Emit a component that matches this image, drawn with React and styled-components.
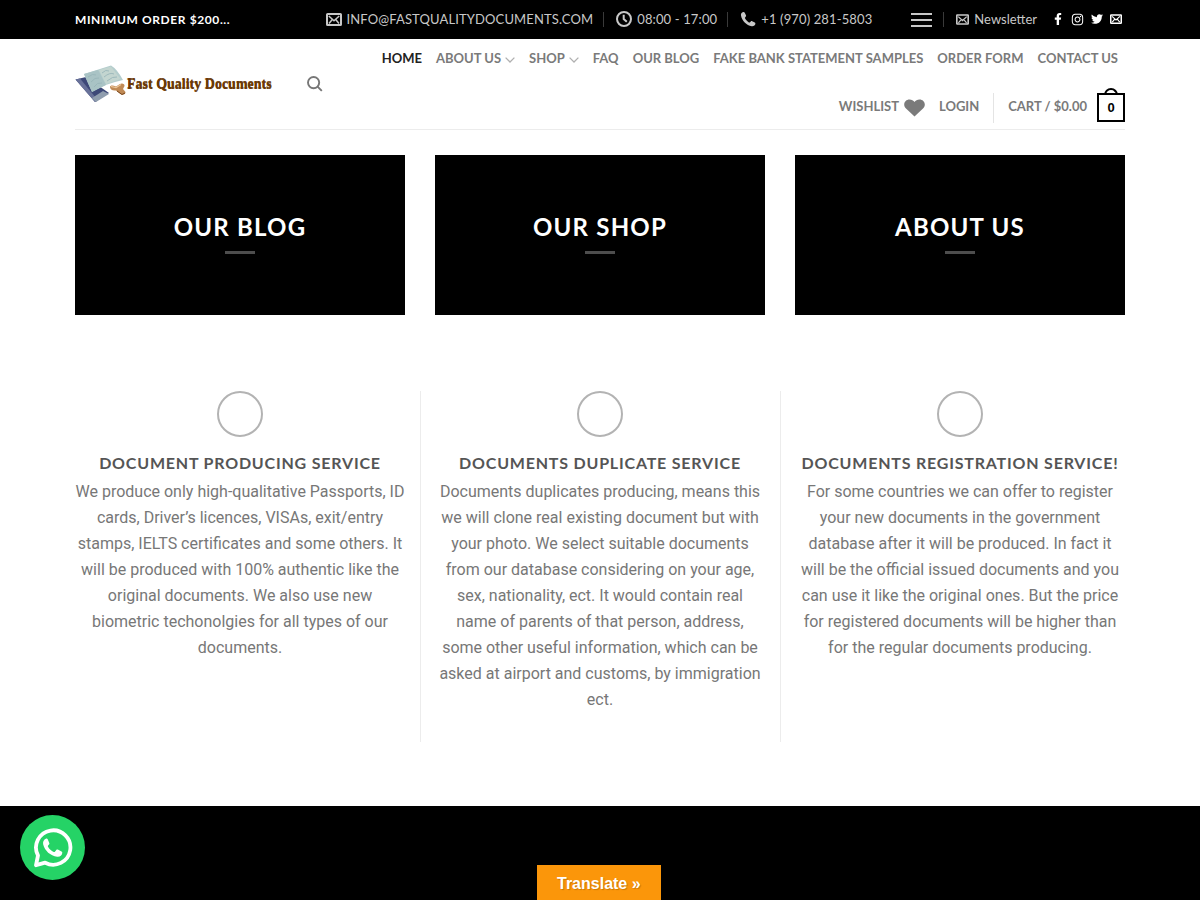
import React from 'react';
import styled, { createGlobalStyle, css } from 'styled-components';
import { FaFacebookF, FaInstagram, FaTwitter } from 'react-icons/fa';

const GlobalStyle = createGlobalStyle`
  *, *::before, *::after { box-sizing: border-box; }
  body {
    margin: 0;
    background: #fff;
    color: #777;
    font-family: Lato, "Liberation Sans", sans-serif;
    font-size: 16px;
  }
  a { color: inherit; text-decoration: none; }
  h3, p, ul { margin: 0; padding: 0; }
  ul { list-style: none; }
  svg { display: block; flex: none; }
`;

const Container = styled.div`
  max-width: 1080px;
  margin: 0 auto;
  padding: 0 15px;
`;

const TopBar = styled.div`
  background: #000;
  color: #c8c8c8;
  font-size: 13px;
`;

const TopInner = styled(Container)`
  display: flex;
  align-items: center;
  min-height: 39px;
`;

const Notice = styled.strong`
  color: #fff;
  font-size: 12px;
  font-weight: 700;
  letter-spacing: 0.05em;
`;

const TopGroup = styled.ul`
  display: flex;
  align-items: center;
  padding-bottom: 1px;
  margin-left: ${(p) => (p.$push ? 'auto' : '0')};
`;

const TopItem = styled.li`
  display: flex;
  align-items: center;
  ${(p) =>
    p.$divided &&
    css`
      &::before {
        content: '';
        width: 1px;
        height: 15px;
        margin: 0 12px 0 10px;
        background: #3a3a3a;
      }
    `}
`;

const TopLink = styled.a`
  display: flex;
  align-items: center;
  gap: 5px;
  letter-spacing: ${(p) => (p.$tracked ? '0.01em' : 'normal')};
  &:hover { color: #fff; }
`;

const MenuButton = styled.button`
  display: block;
  padding: 0;
  margin: 0 1px 0 39px;
  border: 0;
  background: none;
  color: inherit;
  cursor: pointer;
`;

const Social = styled.div`
  display: flex;
  align-items: center;
  gap: 7px;
  margin: 0 3px 0 15px;
  padding-bottom: 1px;
  color: #fff;
`;

const HeaderInner = styled.div`
  display: flex;
  align-items: center;
  min-height: 91px;
  padding-bottom: 1px;
  border-bottom: 1px solid #ececec;
`;

const Logo = styled.a`
  display: flex;
  align-items: center;
  flex: none;
  width: 200px;
  margin-right: 32px;
`;

const LogoText = styled.span`
  color: #6b3a06;
  font: 700 14px "Liberation Serif", serif;
  white-space: nowrap;
  text-shadow: 0 1px 0 #6b3a06;
`;

const SearchButton = styled.button`
  flex: none;
  padding: 0;
  border: 0;
  background: none;
  color: #777;
  cursor: pointer;
`;

const Nav = styled.nav`
  flex: 1;
`;

const NavList = styled.ul`
  display: flex;
  flex-wrap: wrap;
  justify-content: flex-end;
  row-gap: 8px;
`;

const NavItem = styled.li`
  display: flex;
  align-items: center;
  height: 40px;
  margin: 0 7px;
`;

const NavDivider = styled.li`
  align-self: center;
  width: 1px;
  height: 30px;
  margin: 0 7px;
  background: #e4e4e4;
`;

const CartItem = styled(NavItem)`
  margin-right: 0;
`;

const NavLink = styled.a`
  display: flex;
  align-items: center;
  gap: ${(p) => p.$gap || 4}px;
  color: ${(p) => (p.$active ? '#222' : '#7a7a7a')};
  font-size: 13px;
  font-weight: 700;
  line-height: 17px;
  text-transform: uppercase;
  white-space: nowrap;
  &:hover { color: #222; }
`;

const NavLabel = styled.span`
  padding-bottom: 2px;
`;

const Bag = styled.span`
  position: relative;
  display: grid;
  place-items: center;
  width: 28px;
  height: 29px;
  border: 2px solid #000;
  color: #000;
  font-family: "Liberation Sans", sans-serif;
  font-size: 13px;
  &::before {
    content: '';
    position: absolute;
    bottom: 100%;
    width: 14px;
    height: 7px;
    border: 2px solid #000;
    border-bottom: 0;
    border-radius: 7px 7px 0 0;
  }
`;

const Banners = styled(Container)`
  display: grid;
  grid-template-columns: repeat(3, 1fr);
  gap: 30px;
  padding-top: 25px;
`;

const Banner = styled.a`
  display: flex;
  flex-direction: column;
  align-items: center;
  justify-content: center;
  gap: 8px;
  min-height: 160px;
  padding-bottom: 6px;
  background: #000;
  color: #fff;
`;

const BannerTitle = styled.h3`
  font-size: 24px;
  line-height: 32px;
  font-weight: 700;
  letter-spacing: 0.05em;
`;

const BannerRule = styled.span`
  width: 30px;
  height: 3px;
  background: #4d4d4d;
`;

const Features = styled(Container)`
  display: grid;
  grid-template-columns: repeat(3, 1fr);
  padding: 76px 0 64px;
`;

const Feature = styled.article`
  padding: 0 15px 29px;
  text-align: center;
  & + & {
    padding-left: 14px;
    border-left: 1px solid #ececec;
  }
`;

const Ring = styled.div`
  width: 46px;
  height: 46px;
  margin: 0 auto 15px;
  border: 2px solid #b3b3b3;
  border-radius: 50%;
`;

const FeatureTitle = styled.h3`
  margin-bottom: 6px;
  color: #555;
  font-size: 16px;
  line-height: 21px;
  font-weight: 700;
  letter-spacing: 0.05em;
  white-space: nowrap;
`;

const FeatureText = styled.p`
  font-family: Roboto, "Liberation Sans", sans-serif;
  font-size: 16px;
  line-height: 26px;
`;

const DarkSection = styled.section`
  min-height: 94px;
  background: #000;
`;

const Translate = styled.button`
  position: fixed;
  bottom: 0;
  left: 50%;
  margin-left: -63px;
  padding: 9px 20px 7px;
  border: 0;
  background: #fb960a;
  color: #fff;
  font: 700 16px/19px "Liberation Sans", sans-serif;
  text-shadow: 1px 1px 1px rgba(0, 0, 0, 0.2);
  cursor: pointer;
`;

const Chat = styled.a`
  position: fixed;
  left: 20px;
  bottom: 20px;
  display: grid;
  place-items: center;
  width: 65px;
  height: 65px;
  border-radius: 50%;
  background: #25d366;
  color: #fff;
`;

const Envelope = ({ size = 16 }) => (
  <svg width={size} height={Math.round(size * 0.82)} viewBox="0 0 16 13" fill="none" stroke="currentColor" aria-hidden="true">
    <rect x="1" y="1" width="14" height="11" rx="0.6" strokeWidth="2" />
    <path d="M2.800 3 L8 7.800 L13.200 3 M3 10.600 L6.300 6.600 M13 10.600 L9.700 6.600" strokeWidth="1.500" />
  </svg>
);

const Clock = () => (
  <svg width="16" height="16" viewBox="0 0 16 16" fill="none" stroke="currentColor" strokeWidth="2" aria-hidden="true">
    <circle cx="8" cy="8" r="7" />
    <path d="M7.7 3.8 V8 L10.8 10.8" />
  </svg>
);

const handset =
  'M3.2 1 C1.6 1.4 .7 2.7 1 4.4 C1.9 9.6 6.5 14.3 11.7 15.2 C13.6 15.5 15.2 14.4 15.4 12.8 C15.5 12.2 15.2 11.9 14.8 11.6 L12.2 10.2 C11.7 9.9 11.2 10 10.8 10.4 L9.8 11.4 C9.5 11.6 9.2 11.6 8.9 11.4 C7.2 10.4 5.9 9 5 7.3 C4.8 7 4.9 6.7 5.1 6.5 L5.8 5.6 C6.1 5.2 6.2 4.8 6 4.3 L4.6 1.5 C4.3 1 3.8 .8 3.2 1 Z';

const Phone = () => (
  <svg width="16" height="16" viewBox="0 0 16 16" fill="currentColor" aria-hidden="true">
    <path d={handset} />
  </svg>
);

const ChatBubble = () => (
  <svg width="40" height="40" viewBox="0 0 40 40" aria-hidden="true">
    <path
      d="M5 27.500 A17.200 17.200 0 1 1 12.200 34.700 L3 37.200 Z"
      fill="none"
      stroke="currentColor"
      strokeWidth="3.800"
      strokeLinejoin="round"
    />
    <path
      d="M13.200 10.500 C10.600 11.500 9.600 14 10.200 16.600 C11.800 22.800 17.300 28 24.200 28.800 C27.200 29.100 29.300 27.300 29.300 24.600 C29.300 24 29 23.700 28.500 23.400 L24.800 21.600 C24.200 21.400 23.700 21.500 23.300 22 L21.900 23.700 C21.600 24.100 21.200 24.100 20.700 23.900 C18.300 22.800 16.300 21 15 18.700 C14.700 18.200 14.800 17.900 15.100 17.500 L16.200 16.200 C16.500 15.800 16.500 15.400 16.300 14.900 L14.700 11.200 C14.400 10.500 13.900 10.300 13.200 10.500 Z"
      fill="currentColor"
    />
  </svg>
);

const Burger = () => (
  <svg width="21" height="14" viewBox="0 0 21 14" fill="currentColor" aria-hidden="true">
    <path d="M0 0H21V2H0Z M0 6H21V8H0Z M0 12H21V14H0Z" />
  </svg>
);

const Magnifier = () => (
  <svg width="16" height="16" viewBox="0 0 16 16" fill="none" stroke="currentColor" strokeWidth="1.9" aria-hidden="true">
    <circle cx="6.600" cy="6.600" r="5.600" />
    <path d="M10.600 10.600 L14.800 14.800" />
  </svg>
);

const Chevron = () => (
  <svg width="10" height="6" viewBox="0 0 10 6" fill="none" stroke="#b0b0b0" strokeWidth="1.3" aria-hidden="true">
    <path d="M0.6 0.6 L5 5 L9.4 0.6" />
  </svg>
);

const Heart = () => (
  <svg width="21" height="18" viewBox="0 0 21 18" fill="currentColor" aria-hidden="true">
    <path d="M10.5 17.6 L2 9.6 C.6 8.2 .2 6.900 .2 5.600 C.2 2.600 2.500 .4 5.500 .4 C7.600 .4 9.500 1.300 10.500 3 C11.500 1.300 13.400 .4 15.500 .4 C18.500 .4 20.800 2.600 20.800 5.600 C20.800 6.900 20.400 8.200 19 9.600 Z" />
  </svg>
);

const LogoMark = () => (
  <svg width="52" height="38" viewBox="0 0 52 38" aria-hidden="true">
    <path d="M0.500 14.500 L11 12 L34 28 L20 37 Z" fill="#3d4878" />
    <path d="M0.500 14.500 L20 37 L23 35.500 L5 13.500 Z" fill="#687199" />
    <path d="M17 33 L28 26 L34 29 L21 37 Z" fill="#8f9dae" />
    <path d="M9 9 L36 0.500 Q42 4 48 15 Q32 18 17 27 Z" fill="#b4cdcd" />
    <path d="M9 9 L23 5 L31 20 L17 27 Z" fill="#a9c3c5" />
    <path d="M24 5 L36 1.500 L45.500 14 L31 19 Z" fill="#c3d5d0" />
    <path d="M13 12 Q18 8 21 10 M16 17 Q20 12 24 13 M19 22 Q22 17 27 18 M27 8 Q31 4 34 6 M29 12 Q35 7 39 9 M32 16 Q38 11 42 12" stroke="#98b5b9" strokeWidth="0.900" fill="none" />
    <path d="M35 22 C35 20 38 20 41 21.500 L45 19 C47 17.500 50 19 49.500 21 L48 24 L50.500 27 C51 29 48 30.500 46 29.500 L41 25.500 C37 26 35 24 35 22 Z" fill="#c08a55" />
    <path d="M36 21.500 L41 22.500 L46 19.500" stroke="#ebc79c" strokeWidth="1.200" fill="none" />
    <path d="M42 26 L47 29.500 L50 28" stroke="#79481f" strokeWidth="1" fill="none" />
  </svg>
);

const navLinks = [
  { label: 'Home', active: true },
  { label: 'About us', menu: true },
  { label: 'Shop', menu: true },
  { label: 'FAQ' },
  { label: 'Our Blog' },
  { label: 'Fake bank statement samples' },
  { label: 'Order form' },
  { label: 'Contact us' },
];

const banners = ['OUR BLOG', 'OUR SHOP', 'ABOUT US'];

const features = [
  {
    title: 'DOCUMENT PRODUCING SERVICE',
    text: 'We produce only high-qualitative Passports, ID cards, Driver’s licences, VISAs, exit/entry stamps, IELTS certificates and some others. It will be produced with 100% authentic like the original documents. We also use new biometric techonolgies for all types of our documents.',
  },
  {
    title: 'DOCUMENTS DUPLICATE SERVICE',
    text: 'Documents duplicates producing, means this we will clone real existing document but with your photo. We select suitable documents from our database considering on your age, sex, nationality, ect. It would contain real name of parents of that person, address, some other useful information, which can be asked at airport and customs, by immigration ect.',
  },
  {
    title: 'DOCUMENTS REGISTRATION SERVICE!',
    text: 'For some countries we can offer to register your new documents in the government database after it will be produced. In fact it will be the official issued documents and you can use it like the original ones. But the price for registered documents will be higher than for the regular documents producing.',
  },
];

export default function App() {
  return (
    <>
      <GlobalStyle />
      <header>
        <TopBar>
          <TopInner>
            <Notice>MINIMUM ORDER $200...</Notice>
            <TopGroup $push>
              <TopItem>
                <TopLink $tracked href="#email"><Envelope />INFO@FASTQUALITYDOCUMENTS.COM</TopLink>
              </TopItem>
              <TopItem $divided>
                <TopLink $tracked href="#hours"><Clock />08:00 - 17:00</TopLink>
              </TopItem>
              <TopItem $divided>
                <TopLink $tracked href="#phone"><Phone />+1 (970) 281-5803</TopLink>
              </TopItem>
            </TopGroup>
            <MenuButton type="button" aria-label="Menu"><Burger /></MenuButton>
            <TopGroup>
              <TopItem $divided>
                <TopLink href="#newsletter"><Envelope size={13} />Newsletter</TopLink>
              </TopItem>
            </TopGroup>
            <Social>
              <a href="#facebook" aria-label="Facebook"><FaFacebookF size={12} /></a>
              <a href="#instagram" aria-label="Instagram"><FaInstagram size={13} /></a>
              <a href="#twitter" aria-label="Twitter"><FaTwitter size={12} /></a>
              <a href="#mail" aria-label="Email"><Envelope size={12} /></a>
            </Social>
          </TopInner>
        </TopBar>
        <Container>
          <HeaderInner>
            <Logo href="#home">
              <LogoMark />
              <LogoText>Fast Quality Documents</LogoText>
            </Logo>
            <SearchButton type="button" aria-label="Search"><Magnifier /></SearchButton>
            <Nav>
              <NavList>
                {navLinks.map((link) => (
                  <NavItem key={link.label}>
                    <NavLink href="#" $active={link.active}>
                      <NavLabel>{link.label}</NavLabel>
                      {link.menu && <Chevron />}
                    </NavLink>
                  </NavItem>
                ))}
                <NavItem>
                  <NavLink href="#wishlist" $gap={5}><NavLabel>Wishlist</NavLabel><Heart /></NavLink>
                </NavItem>
                <NavItem>
                  <NavLink href="#login"><NavLabel>Login</NavLabel></NavLink>
                </NavItem>
                <NavDivider />
                <CartItem>
                  <NavLink href="#cart" $gap={10}><NavLabel>Cart / $0.00</NavLabel><Bag>0</Bag></NavLink>
                </CartItem>
              </NavList>
            </Nav>
          </HeaderInner>
        </Container>
      </header>
      <main>
        <Banners>
          {banners.map((title) => (
            <Banner href="#" key={title}>
              <BannerTitle>{title}</BannerTitle>
              <BannerRule />
            </Banner>
          ))}
        </Banners>
        <Features>
          {features.map((f) => (
            <Feature key={f.title}>
              <Ring />
              <FeatureTitle>{f.title}</FeatureTitle>
              <FeatureText>{f.text}</FeatureText>
            </Feature>
          ))}
        </Features>
        <DarkSection />
      </main>
      <Chat href="#whatsapp" aria-label="WhatsApp"><ChatBubble /></Chat>
      <Translate type="button">Translate »</Translate>
    </>
  );
}
